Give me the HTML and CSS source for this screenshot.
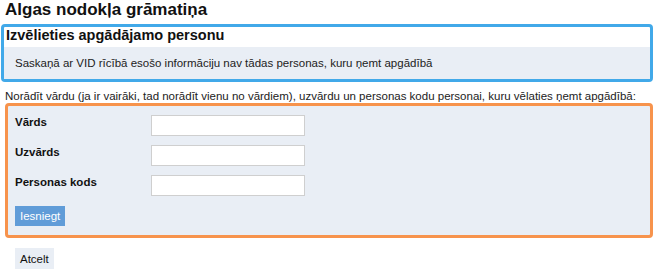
FILE: index.html
```html
<!DOCTYPE html>
<html lang="lv">
<head>
    <meta charset="UTF-8">
    <meta name="viewport" content="width=device-width, initial-scale=1.0">
    <title>Algas nodokļa grāmatiņa</title>
    <link rel="stylesheet" href="styles.css">
</head>
<body>
    <h1 class="page-title">Algas nodokļa grāmatiņa</h1>

    <div class="choose-box">
        <h2>Izvēlieties apgādājamo personu</h2>
        <div class="notice">Saskaņā ar VID rīcībā esošo informāciju nav tādas personas, kuru ņemt apgādībā</div>
    </div>

    <p class="instructions">Norādīt vārdu (ja ir vairāki, tad norādīt vienu no vārdiem), uzvārdu un personas kodu personai, kuru vēlaties ņemt apgādībā:</p>

    <form class="person-form">
        <div class="form-row">
            <label for="vards">Vārds</label>
            <input type="text" id="vards" name="vards">
        </div>
        <div class="form-row">
            <label for="uzvards">Uzvārds</label>
            <input type="text" id="uzvards" name="uzvards">
        </div>
        <div class="form-row">
            <label for="kods">Personas kods</label>
            <input type="text" id="kods" name="kods">
        </div>
        <button type="submit" class="btn btn-primary">Iesniegt</button>
    </form>

    <div class="actions">
        <button type="button" class="btn btn-light">Atcelt</button>
    </div>
</body>
</html>
```

FILE: styles.css
```css
body {
    font-family: "Liberation Sans", Arial, sans-serif;
    font-size: 11.5px;
    color: #222;
    margin: 0;
    background: white;
}

.page-title {
    font-size: 17px;
    font-weight: bold;
    margin: 0;
    padding: 0 5px;
    line-height: 20px;
    color: #111;
}

.choose-box {
    margin: 4px 1px 0 1px;
    border: 3px solid #41a9e9;
    border-radius: 4px;
}

.choose-box h2 {
    font-size: 14.5px;
    margin: 0;
    padding: 0 2px 3px;
    line-height: 17px;
    color: #111;
}

.notice {
    background-color: #e9eef5;
    padding: 9px 11px;
    line-height: 14px;
}

.instructions {
    margin: 7px 5px 0;
    line-height: 14px;
}

.person-form {
    margin: 0 1px 0 5px;
    padding: 9px 7px 9px;
    background-color: #e9eef5;
    border: 3px solid #f7934c;
    border-radius: 4px;
}

.form-row {
    display: grid;
    grid-template-columns: 136px 154px;
    align-items: start;
    margin-bottom: 9px;
}

label {
    font-weight: bold;
    color: #111;
    line-height: 14px;
}

input {
    height: 21px;
    box-sizing: border-box;
    border: 1px solid #cfcfcf;
    background: white;
    padding: 2px 4px;
    font: inherit;
}

.btn {
    font-family: inherit;
    font-size: 11.5px;
    border: none;
    padding: 0 5px;
    height: 20px;
    line-height: 20px;
    cursor: pointer;
}

.btn-primary {
    margin-top: 1px;
    background-color: #609cd8;
    color: white;
}

.btn-light {
    height: 21px;
    background-color: #e9eef5;
    color: #111;
}

.actions {
    padding: 10px 15px 0;
}
```
